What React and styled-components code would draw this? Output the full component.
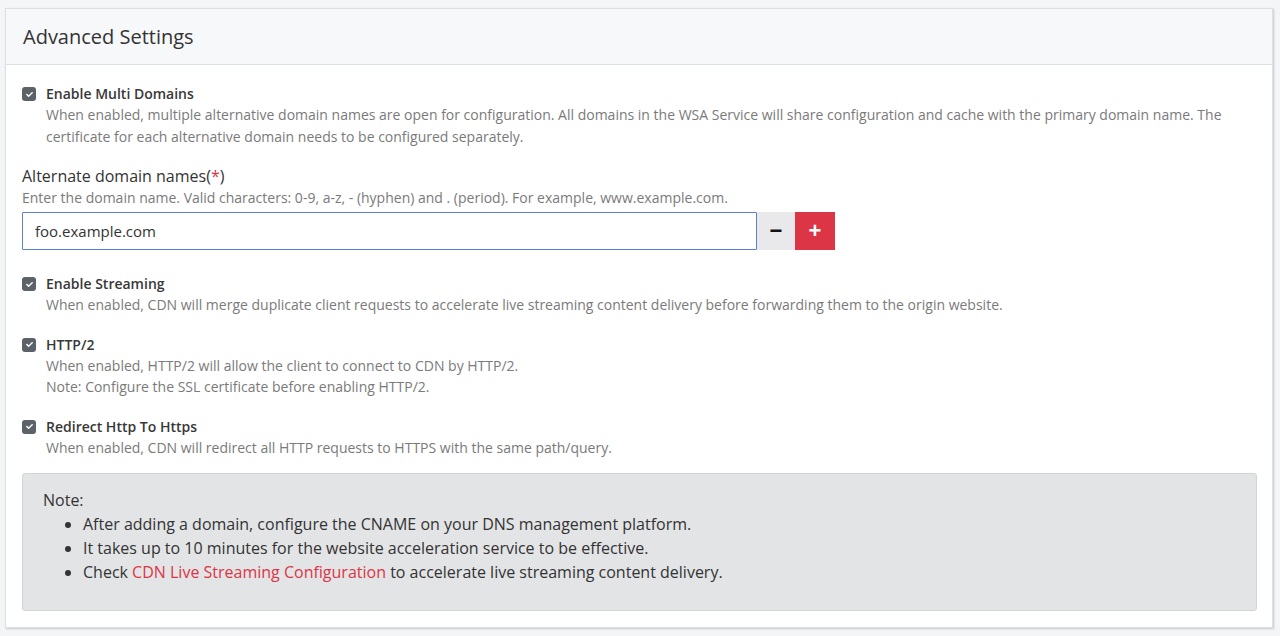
import styled, { createGlobalStyle } from "styled-components";
import { FaCheck } from "react-icons/fa";

const GlobalStyle = createGlobalStyle`
  body {
    margin: 0;
    background: #f4f5f7;
    font-family: "Open Sans", "Noto Sans", sans-serif;
    color: #333;
  }
`;

const Page = styled.div`
  padding: 8px 7px 8px 5px;
`;

const Card = styled.section`
  background: #fff;
  border: 1px solid #dcdfe3;
  box-shadow: 1px 1px 2px rgba(0, 0, 0, 0.18);
`;

const CardHeader = styled.header`
  background: #f7f8fa;
  border-bottom: 1px solid #dcdfe3;
  height: 55px;
  display: flex;
  align-items: center;
  padding: 0 17px;
`;

const Title = styled.h2`
  margin: 0;
  font-size: 20px;
  font-weight: 400;
  color: #333;
`;

const CardBody = styled.div`
  padding: 19px 15px 16px 16px;
  display: flex;
  flex-direction: column;
`;

const Option = styled.div`
  display: grid;
  grid-template-columns: 14px 1fr;
  column-gap: 10px;
  margin-bottom: ${(p) => p.$gap ?? 19}px;
`;

const Box = styled.span`
  width: 14px;
  height: 14px;
  border-radius: 3px;
  background: #5d6168;
  display: flex;
  align-items: center;
  justify-content: center;
  margin-top: 3px;

  & svg {
    width: 7px;
    height: 7px;
    color: #fff;
  }
`;

const OptionLabel = styled.div`
  font-size: 14px;
  font-weight: 600;
  line-height: 20px;
  color: #383838;
`;

const Desc = styled.div`
  grid-column: 2;
  font-size: 14px;
  line-height: 21.5px;
  color: #7a7a7a;
`;

const Field = styled.div`
  margin-bottom: 24px;
`;

const FieldLabel = styled.div`
  font-size: 16px;
  line-height: 22px;
  color: #333;
`;

const Required = styled.span`
  color: #dc3545;
`;

const Hint = styled.div`
  font-size: 14px;
  line-height: 22px;
  color: #7a7a7a;
  margin-bottom: 3px;
`;

const InputRow = styled.div`
  display: flex;
  height: 38px;
  width: 813px;
`;

const Input = styled.input`
  flex: 1;
  min-width: 0;
  border: 1px solid #5b7fdf;
  border-radius: 1px;
  padding: 0 12px;
  font: inherit;
  font-size: 15px;
  color: #333;
  outline: none;
`;

const SquareButton = styled.button`
  width: ${(p) => p.$w}px;
  border: none;
  padding: 0;
  display: flex;
  align-items: center;
  justify-content: center;
  background: ${(p) => (p.$danger ? "#dc3545" : "#e9e9ec")};
  color: ${(p) => (p.$danger ? "#fff" : "#111")};
  font-size: 22px;
  font-weight: 700;
  cursor: pointer;
`;

const NoteBox = styled.div`
  background: #e3e4e6;
  border: 1px solid #d3d4d6;
  border-radius: 3px;
  padding: 14px 20px 26px;
  font-size: 16px;
  color: #333;
`;

const NoteTitle = styled.div`
  line-height: 24px;
`;

const NoteList = styled.ul`
  margin: 0;
  padding-left: 40px;
`;

const NoteItem = styled.li`
  line-height: 24px;
`;

const Link = styled.a`
  color: #dc3545;
  text-decoration: none;
`;

const options = [
  {
    label: "Enable Streaming",
    desc: [
      "When enabled, CDN will merge duplicate client requests to accelerate live streaming content delivery before forwarding them to the origin website.",
    ],
  },
  {
    label: "HTTP/2",
    desc: [
      "When enabled, HTTP/2 will allow the client to connect to CDN by HTTP/2.",
      "Note: Configure the SSL certificate before enabling HTTP/2.",
    ],
  },
  {
    label: "Redirect Http To Https",
    desc: ["When enabled, CDN will redirect all HTTP requests to HTTPS with the same path/query."],
    gap: 15,
  },
];

const Check = () => (
  <Box>
    <FaCheck />
  </Box>
);

export default function App() {
  return (
    <>
      <GlobalStyle />
      <Page>
        <Card>
          <CardHeader>
            <Title>Advanced Settings</Title>
          </CardHeader>
          <CardBody>
            <Option $gap={18}>
              <Check />
              <OptionLabel>Enable Multi Domains</OptionLabel>
              <Desc>
                When enabled, multiple alternative domain names are open for configuration. All domains in the WSA
                Service will share configuration and cache with the primary domain name. The certificate for each
                alternative domain needs to be configured separately.
              </Desc>
            </Option>
            <Field>
              <FieldLabel>
                Alternate domain names(<Required>*</Required>)
              </FieldLabel>
              <Hint>
                Enter the domain name. Valid characters: 0-9, a-z, - (hyphen) and . (period). For example,
                www.example.com.
              </Hint>
              <InputRow>
                <Input defaultValue="foo.example.com" />
                <SquareButton $w={38}>−</SquareButton>
                <SquareButton $w={40} $danger>
                  +
                </SquareButton>
              </InputRow>
            </Field>
            {options.map((o) => (
              <Option key={o.label} $gap={o.gap}>
                <Check />
                <OptionLabel>{o.label}</OptionLabel>
                <Desc>
                  {o.desc.map((d) => (
                    <div key={d}>{d}</div>
                  ))}
                </Desc>
              </Option>
            ))}
            <NoteBox>
              <NoteTitle>Note:</NoteTitle>
              <NoteList>
                <NoteItem>After adding a domain, configure the CNAME on your DNS management platform.</NoteItem>
                <NoteItem>It takes up to 10 minutes for the website acceleration service to be effective.</NoteItem>
                <NoteItem>
                  Check <Link href="#">CDN Live Streaming Configuration</Link> to accelerate live streaming content
                  delivery.
                </NoteItem>
              </NoteList>
            </NoteBox>
          </CardBody>
        </Card>
      </Page>
    </>
  );
}
